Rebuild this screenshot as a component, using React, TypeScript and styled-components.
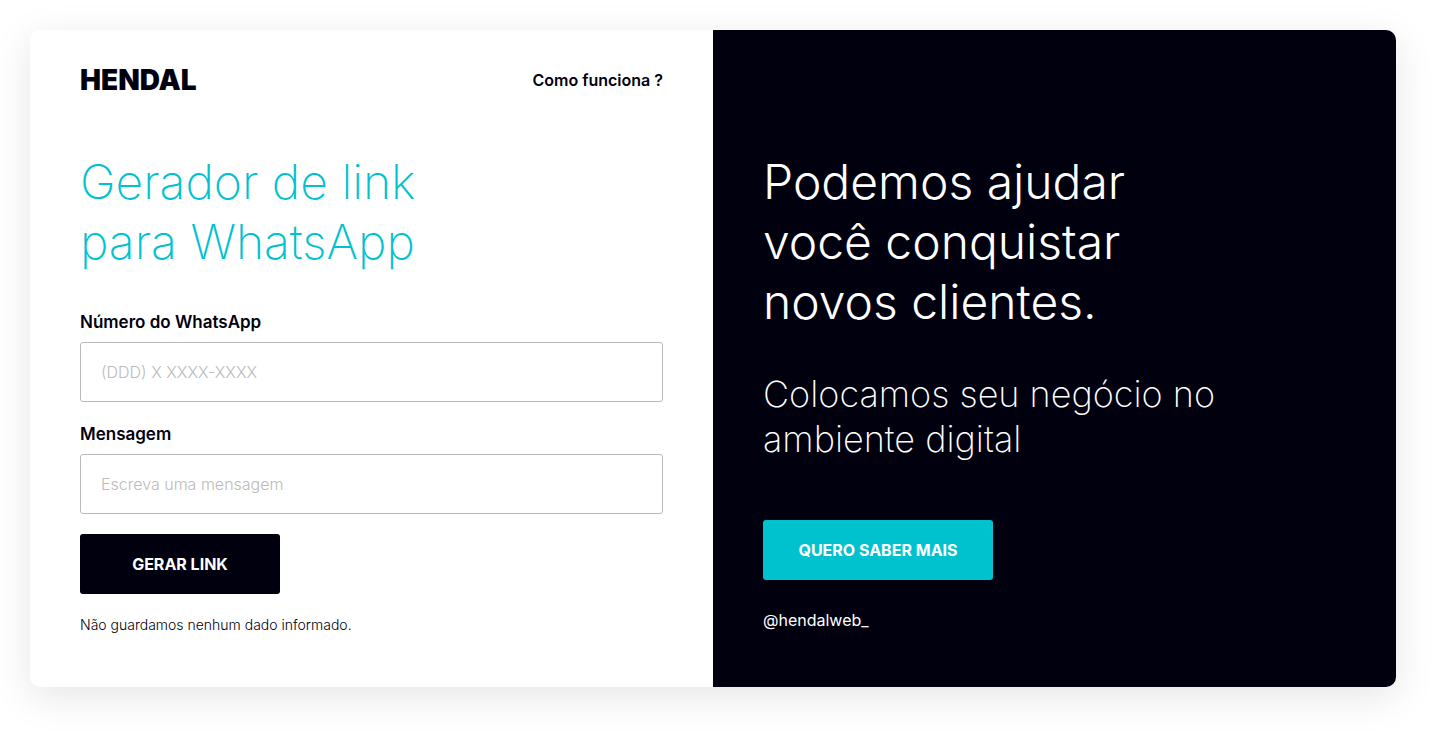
import React from 'react';
import styled, { createGlobalStyle } from 'styled-components';

const ink = '#00000f';
const teal = '#00c2cf';

const GlobalStyle = createGlobalStyle`
  *, *::before, *::after {
    box-sizing: border-box;
  }
  body {
    margin: 0;
    background: #fff;
    color: ${ink};
    font-family: Inter, "Open Sans", sans-serif;
  }
`;

const Page = styled.div`
  display: flex;
  min-height: 100vh;
  padding: 30px 50px 50px 30px;
`;

const Card = styled.main`
  flex: 1;
  display: grid;
  grid-template-columns: 1fr 1fr;
  overflow: hidden;
  border-radius: 10px;
  background: #fff;
  box-shadow: 0 10px 40px rgba(0, 0, 0, 0.1);
  @media (max-width: 900px) {
    grid-template-columns: 1fr;
  }
`;

const GeneratorPanel = styled.section`
  padding: 40px 50px;
`;

const PromoPanel = styled.section`
  display: flex;
  flex-direction: column;
  align-items: flex-start;
  padding: 122px 50px 40px;
  background: ${ink};
  color: #fff;
`;

const Header = styled.header`
  display: flex;
  align-items: center;
  justify-content: space-between;
  height: 20px;
  margin-bottom: 62px;
`;

const Logo = styled.a`
  color: ${ink};
  font-size: 28px;
  font-weight: 900;
  line-height: 20px;
  text-decoration: none;
`;

const HelpLink = styled.a`
  color: ${ink};
  font-size: 16px;
  font-weight: 600;
  line-height: 20px;
  text-decoration: none;
`;

const Title = styled.h1`
  margin: 0 0 38px;
  color: ${teal};
  font-size: 48px;
  font-weight: 200;
  line-height: 60px;
`;

const Form = styled.form`
  display: flex;
  flex-direction: column;
  align-items: flex-start;
  gap: 20px;
`;

const Field = styled.div`
  display: flex;
  flex-direction: column;
  gap: 8px;
  width: 100%;
`;

const Label = styled.label`
  font-size: 17px;
  font-weight: 600;
  line-height: 24px;
`;

const TextInput = styled.input`
  width: 100%;
  height: 60px;
  padding: 0 20px;
  border: 1px solid #bbb;
  border-radius: 3px;
  background: #fff;
  color: ${ink};
  font-family: inherit;
  font-size: 16px;
  &::placeholder {
    color: #bbb;
    font-weight: 300;
    opacity: 1;
  }
`;

const Button = styled.button<{ $accent?: boolean }>`
  width: ${({ $accent }) => ($accent ? 230 : 200)}px;
  height: 60px;
  padding: 0;
  border: 0;
  border-radius: 3px;
  background: ${({ $accent }) => ($accent ? teal : ink)};
  color: #fff;
  font-family: inherit;
  font-size: 16px;
  font-weight: 700;
  cursor: pointer;
`;

const Note = styled.p`
  margin: 0;
  font-size: 14px;
  font-weight: 300;
  line-height: 22px;
`;

const PromoTitle = styled.h2`
  margin: 0 0 40px;
  font-size: 48px;
  font-weight: 300;
  line-height: 60px;
`;

const PromoText = styled.p`
  margin: 0 0 58px;
  font-size: 36px;
  font-weight: 200;
  line-height: 45px;
`;

const Handle = styled.a`
  margin-top: 30px;
  color: #fff;
  font-size: 16px;
  line-height: 20px;
  text-decoration: none;
`;

export default function App() {
  return (
    <>
      <GlobalStyle />
      <Page>
        <Card>
          <GeneratorPanel>
            <Header>
              <Logo href="#">HENDAL</Logo>
              <HelpLink href="#como-funciona">Como funciona ?</HelpLink>
            </Header>
            <Title>
              Gerador de link
              <br />
              para WhatsApp
            </Title>
            <Form onSubmit={(event) => event.preventDefault()}>
              <Field>
                <Label htmlFor="numero">Número do WhatsApp</Label>
                <TextInput id="numero" type="tel" placeholder="(DDD) X XXXX-XXXX" />
              </Field>
              <Field>
                <Label htmlFor="mensagem">Mensagem</Label>
                <TextInput id="mensagem" type="text" placeholder="Escreva uma mensagem" />
              </Field>
              <Button type="submit">GERAR LINK</Button>
              <Note>Não guardamos nenhum dado informado.</Note>
            </Form>
          </GeneratorPanel>
          <PromoPanel>
            <PromoTitle>
              Podemos ajudar
              <br />
              você conquistar
              <br />
              novos clientes.
            </PromoTitle>
            <PromoText>
              Colocamos seu negócio no
              <br />
              ambiente digital
            </PromoText>
            <Button type="button" $accent>
              QUERO SABER MAIS
            </Button>
            <Handle href="#hendalweb">@hendalweb_</Handle>
          </PromoPanel>
        </Card>
      </Page>
    </>
  );
}
